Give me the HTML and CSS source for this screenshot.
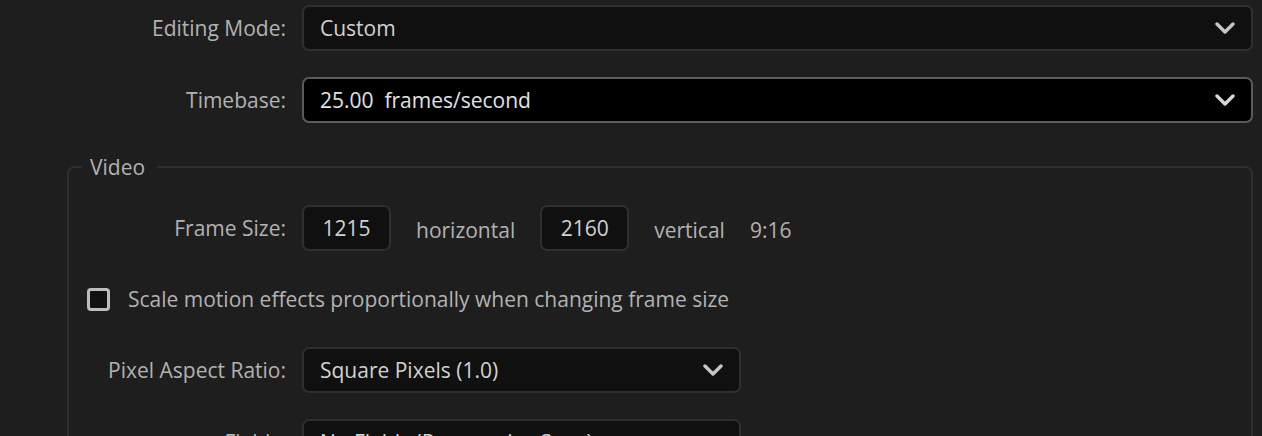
FILE: index.html
```html
<!DOCTYPE html>
<html lang="en">
<head>
<meta charset="utf-8">
<title>Sequence Settings</title>
<link rel="stylesheet" href="styles.css">
</head>
<body>
<div class="panel">
  <div class="row">
    <div class="label">Editing Mode:</div>
    <div class="select">
      <span class="value">Custom</span>
      <svg class="chev" width="20" height="12" viewBox="0 0 20 12"><polyline points="2,2 10,10 18,2" fill="none" stroke="#c6c6c6" stroke-width="3.4" stroke-linecap="round" stroke-linejoin="round"/></svg>
    </div>
  </div>
  <div class="row">
    <div class="label">Timebase:</div>
    <div class="select focused">
      <span class="value">25.00&nbsp; frames/second</span>
      <svg class="chev" width="20" height="12" viewBox="0 0 20 12"><polyline points="2,2 10,10 18,2" fill="none" stroke="#d6d6d6" stroke-width="3.4" stroke-linecap="round" stroke-linejoin="round"/></svg>
    </div>
  </div>

  <fieldset class="group">
    <legend class="legend">Video</legend>
    <div class="grow first">
      <div class="glabel">Frame Size:</div>
      <div class="inline">
        <div class="num">1215</div>
        <span class="text">horizontal</span>
        <div class="num">2160</div>
        <span class="text">vertical</span>
        <span class="text">9:16</span>
      </div>
    </div>
    <div class="check-row">
      <span class="checkbox"></span>
      <span class="text">Scale motion effects proportionally when changing frame size</span>
    </div>
    <div class="grow">
      <div class="glabel">Pixel Aspect Ratio:</div>
      <div class="select small">
        <span class="value">Square Pixels (1.0)</span>
        <svg class="chev" width="20" height="12" viewBox="0 0 20 12"><polyline points="2,2 10,10 18,2" fill="none" stroke="#c6c6c6" stroke-width="3.4" stroke-linecap="round" stroke-linejoin="round"/></svg>
      </div>
    </div>
    <div class="grow next">
      <div class="glabel">Fields:</div>
      <div class="select small">
        <span class="value">No Fields (Progressive Scan)</span>
        <svg class="chev" width="20" height="12" viewBox="0 0 20 12"><polyline points="2,2 10,10 18,2" fill="none" stroke="#c6c6c6" stroke-width="3.4" stroke-linecap="round" stroke-linejoin="round"/></svg>
      </div>
    </div>
  </fieldset>
</div>
</body>
</html>
```

FILE: styles.css
```css
html, body {
  margin: 0;
  padding: 0;
  background: #1e1e1e;
  overflow: hidden;
}
body {
  font-family: "Open Sans", "Liberation Sans", sans-serif;
  font-size: 21px;
  line-height: 28px;
  color: #b2b2b2;
}
.panel {
  width: 1262px;
  height: 436px;
  padding-top: 5px;
  box-sizing: border-box;
}
.row {
  display: grid;
  grid-template-columns: 286px 951px;
  column-gap: 16px;
  align-items: center;
  margin-bottom: 26px;
}
.label, .glabel {
  text-align: right;
  color: #b2b2b2;
  white-space: nowrap;
}
.select {
  height: 46px;
  box-sizing: border-box;
  border: 2px solid #2f2f2f;
  border-radius: 7px;
  background: #101010;
  display: flex;
  align-items: center;
  justify-content: space-between;
  padding: 0 16px 0 16px;
}
.select.focused {
  background: #000;
  border-color: #5a5a5a;
}
.select.small {
  width: 439px;
}
.value {
  color: #d2d2d2;
  white-space: nowrap;
}
.focused .value {
  color: #e2e2e2;
}
.chev {
  display: block;
}
.group {
  margin: 30px 0 0 67px;
  width: 1186px;
  box-sizing: border-box;
  border: 2px solid #2f2f2f;
  border-radius: 8px;
  padding: 0;
  min-width: 0;
}
.legend {
  margin-left: 13px;
  padding: 0 12px 0 8px;
  color: #b2b2b2;
  line-height: 28px;
}
.grow {
  display: grid;
  grid-template-columns: 217px auto;
  column-gap: 16px;
  align-items: center;
  justify-content: start;
}
.grow.first {
  margin-top: 24px;
}
.grow.next {
  margin-top: 26px;
}
.inline {
  display: flex;
  align-items: center;
  gap: 25px;
}
.num {
  width: 89px;
  height: 46px;
  box-sizing: border-box;
  border: 2px solid #2f2f2f;
  border-radius: 7px;
  background: #101010;
  color: #d2d2d2;
  display: flex;
  align-items: center;
  justify-content: center;
}
.text {
  color: #b2b2b2;
  white-space: nowrap;
  padding-top: 4px;
}
.check-row {
  display: flex;
  align-items: center;
  gap: 18px;
  margin: 34px 0 34px 18px;
}
.check-row .text {
  padding-top: 0;
}
.checkbox {
  width: 23px;
  height: 23px;
  box-sizing: border-box;
  border: 3px solid #bdbdbd;
  border-radius: 4px;
  background: #111;
}
```
